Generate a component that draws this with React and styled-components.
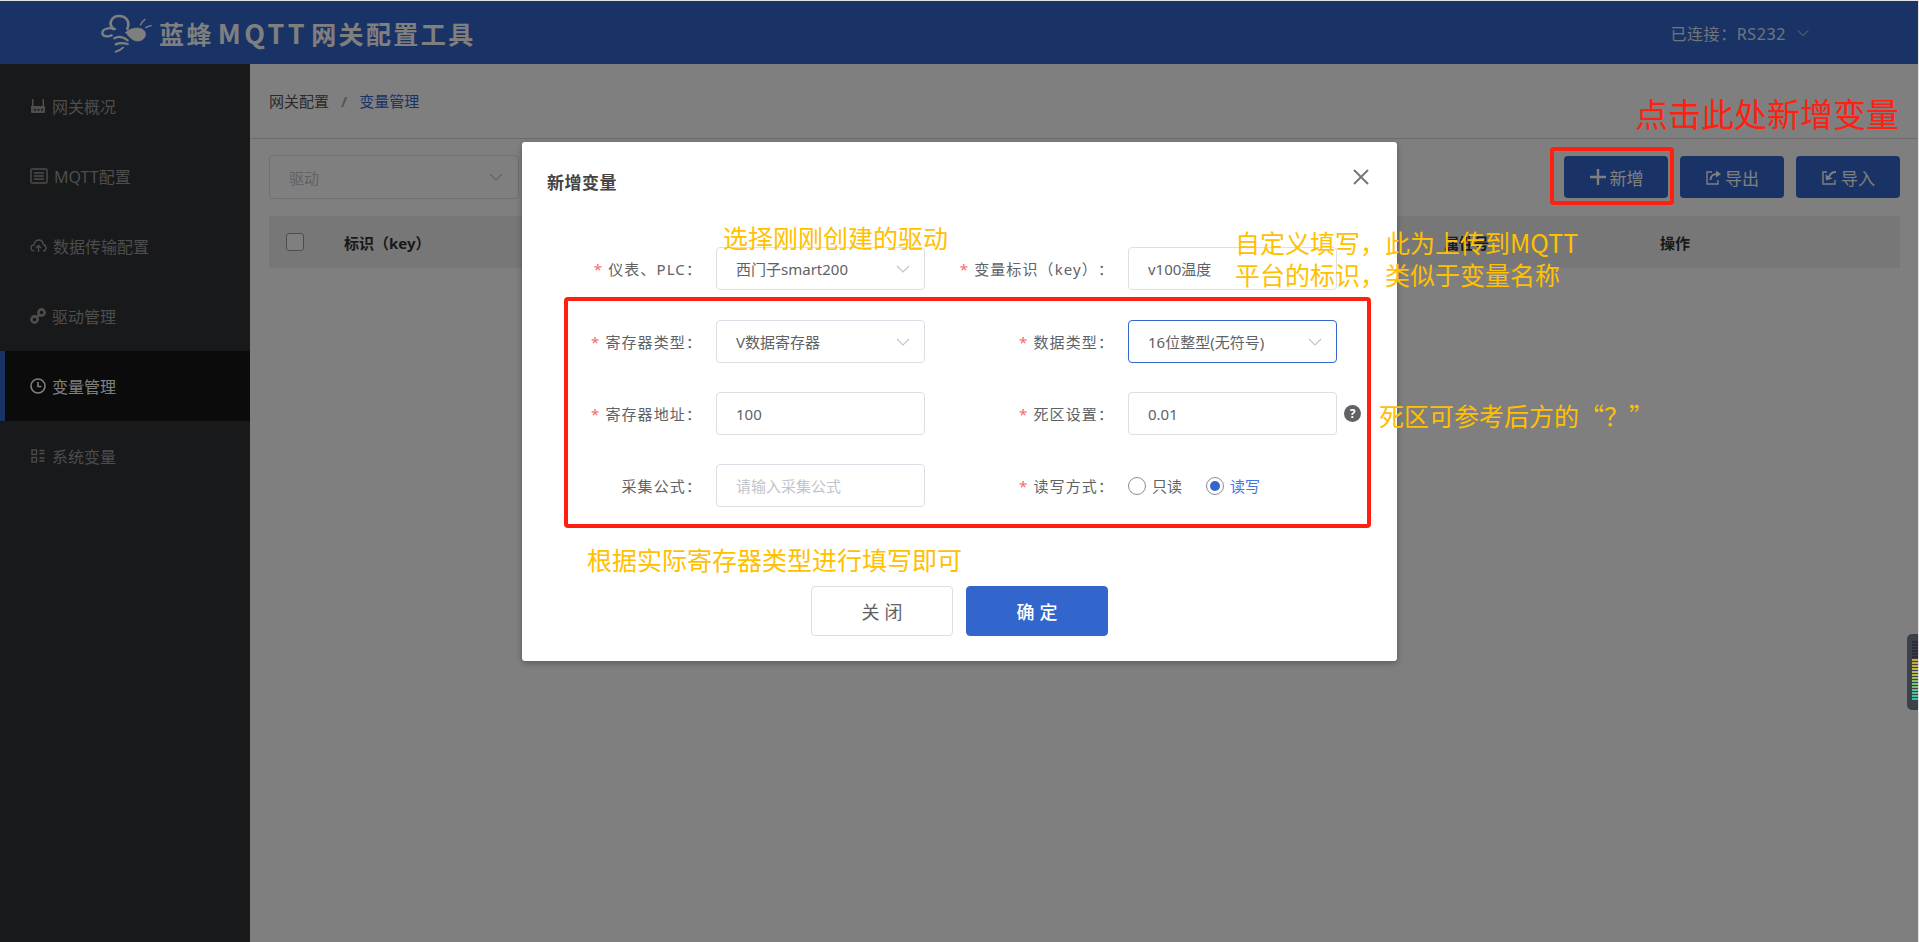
import React from 'react';
import styled, { createGlobalStyle } from 'styled-components';

const GlobalStyle = createGlobalStyle`
  html, body {
    margin: 0;
    padding: 0;
    background: #fff;
    font-family: "Noto Sans", "Noto Sans CJK SC", "Liberation Sans", sans-serif;
  }
  * { box-sizing: border-box; }
`;

const Page = styled.div`
  position: relative;
  width: 1919px;
  height: 942px;
  overflow: hidden;
  border-top: 1px solid #e4e4e4;
  border-right: 1px solid #e4e4e4;
  display: flex;
  flex-direction: column;
`;

const Header = styled.header`
  height: 63px;
  flex: none;
  background: #3366cc;
  display: flex;
  align-items: center;
  justify-content: space-between;
  padding: 0 109px 0 100px;
  color: #fff;
`;

const Brand = styled.div`
  display: flex;
  align-items: center;
  gap: 4px;
`;

const BrandTitle = styled.span`
  font-family: "Noto Sans CJK SC", sans-serif;
  font-size: 25px;
  font-weight: 700;
  letter-spacing: 2.4px;
  white-space: nowrap;
`;

const BrandLatin = styled.span`
  margin: 0 3px 0 4px;
  font-size: 27px;
  letter-spacing: 3.4px;
`;

const Connection = styled.div`
  display: flex;
  align-items: center;
  gap: 11px;
  font-size: 16px;
  color: #fff;
  opacity: 0.85;
  letter-spacing: 0.6px;
`;

const Body = styled.div`
  flex: 1;
  display: flex;
  min-height: 0;
`;

const Sidebar = styled.nav`
  width: 250px;
  flex: none;
  background: #303236;
  padding-top: 7px;
`;

const NavItem = styled.div`
  height: 70px;
  display: flex;
  align-items: center;
  gap: 6px;
  font-size: 16px;
  color: ${p => (p.$active ? '#fff' : '#9a9a9a')};
  background: ${p => (p.$active ? '#161616' : 'transparent')};
  border-left: ${p => (p.$active ? '5px solid #3366cc' : 'none')};
  padding-left: ${p => (p.$active ? '25px' : '30px')};
  white-space: nowrap;
`;

const Main = styled.main`
  flex: 1;
  display: flex;
  flex-direction: column;
  min-width: 0;
  background: #fff;
`;

const Breadcrumb = styled.div`
  height: 75px;
  flex: none;
  display: flex;
  align-items: center;
  padding: 0 19px 1px;
  border-bottom: 1px solid #d8d8d8;
  font-size: 15px;
  color: #555;
`;

const CrumbSep = styled.span`
  margin: 0 12px;
  color: #aaa;
  font-weight: 700;
`;

const CrumbCurrent = styled.span`
  color: #3366cc;
`;

const Toolbar = styled.div`
  display: flex;
  align-items: center;
  justify-content: space-between;
  padding: 16px 18px 17px 19px;
`;

const FilterSelect = styled.div`
  width: 250px;
  height: 44px;
  border: 1px solid #dcdfe6;
  border-radius: 4px;
  display: flex;
  align-items: center;
  justify-content: space-between;
  padding: 0 15px 0 19px;
  color: #c0c4cc;
  font-size: 15px;
`;

const ToolbarActions = styled.div`
  display: flex;
  gap: 12px;
`;

const ActionButton = styled.button`
  width: 104px;
  height: 42px;
  border: none;
  border-radius: 4px;
  background: #3366cc;
  color: #fff;
  font-family: inherit;
  font-size: 17px;
  display: flex;
  align-items: center;
  justify-content: center;
  gap: 3px;
  padding: 0;
`;

const TableHead = styled.div`
  margin: 0 18px 0 19px;
  height: 52px;
  background: #eee;
  display: grid;
  grid-template-columns: 75px 1100px 216px 1fr;
  align-items: center;
  font-size: 15px;
  font-weight: 700;
  color: #333;
`;

const CheckBox = styled.span`
  width: 18px;
  height: 18px;
  margin-left: 17px;
  background: #fff;
  border: 1px solid #9a9ba0;
  border-radius: 3px;
`;

const Overlay = styled.div`
  position: absolute;
  inset: 0;
  background: rgba(0, 0, 0, 0.5);
  display: flex;
  justify-content: center;
  align-items: flex-start;
  padding: 141px 0 0 1px;
`;

const Modal = styled.section`
  width: 875px;
  height: 519px;
  background: #fff;
  border-radius: 3px;
  box-shadow: 0 2px 6px rgba(0, 0, 0, 0.3);
  display: flex;
  flex-direction: column;
`;

const ModalHead = styled.div`
  height: 105px;
  flex: none;
  display: flex;
  justify-content: space-between;
  align-items: flex-start;
  padding: 29px 28px 0 25px;
`;

const ModalTitle = styled.h3`
  margin: 0;
  font-size: 17px;
  letter-spacing: 0.5px;
  line-height: 24px;
  font-weight: 700;
  color: #444;
`;

const CloseIcon = styled.svg`
  margin-top: -2px;
  width: 16px;
  height: 16px;
`;

const FormRow = styled.div`
  display: grid;
  grid-template-columns: 194px 209px 203px 209px auto;
  align-items: center;
  height: 43px;
  margin-bottom: ${p => (p.$first ? '30px' : '29px')};
`;

const FieldLabel = styled.label`
  text-align: right;
  padding-right: 14px;
  font-size: 15px;
  letter-spacing: 1.1px;
  text-spacing-trim: space-all;
  color: #606266;
  white-space: nowrap;

  &::before {
    content: ${p => (p.$required ? "'*'" : "''")};
    color: #f56c6c;
    margin-right: 5px;
  }
`;

const TextField = styled.input`
  width: 209px;
  height: 43px;
  border: 1px solid #dcdfe6;
  border-radius: 4px;
  padding: 0 19px;
  font-family: inherit;
  font-size: 15px;
  color: #606266;
  outline: none;

  &::placeholder {
    color: #c0c4cc;
  }
`;

const SelectField = styled.div`
  width: 209px;
  height: 43px;
  border: 1px solid ${p => (p.$focused ? '#3366cc' : '#dcdfe6')};
  border-radius: 4px;
  display: flex;
  align-items: center;
  justify-content: space-between;
  padding: 0 14px 0 19px;
  font-size: 15px;
  color: #606266;
  white-space: nowrap;
`;

const HelpBadge = styled.span`
  width: 17px;
  height: 17px;
  margin-left: 7px;
  border-radius: 50%;
  background: #606266;
  color: #fff;
  font-size: 12px;
  font-weight: 700;
  line-height: 17px;
  text-align: center;
`;

const RadioGroup = styled.div`
  display: flex;
  align-items: center;
`;

const RadioDot = styled.span`
  width: 18px;
  height: 18px;
  border-radius: 50%;
  border: 1px solid #8a8d93;
  display: flex;
  align-items: center;
  justify-content: center;
  flex: none;

  &::after {
    content: '';
    width: 10px;
    height: 10px;
    border-radius: 50%;
    background: ${p => (p.$checked ? '#3366cc' : 'transparent')};
  }
`;

const RadioText = styled.span`
  margin: 0 24px 0 6px;
  font-size: 15px;
  white-space: nowrap;
  color: ${p => (p.$checked ? '#3f74e6' : '#606266')};
`;

const ModalFooter = styled.div`
  margin-top: 50px;
  display: flex;
  justify-content: center;
  gap: 13px;
`;

const FooterButton = styled.button`
  width: 142px;
  height: 50px;
  border-radius: 4px;
  border: 1px solid ${p => (p.$primary ? '#3366cc' : '#dcdfe6')};
  background: ${p => (p.$primary ? '#3366cc' : '#fff')};
  color: ${p => (p.$primary ? '#fff' : '#606266')};
  font-family: inherit;
  font-size: 18px;
  font-weight: ${p => (p.$primary ? 500 : 400)};
  letter-spacing: 5px;
  text-indent: 5px;
`;

const Annotation = styled.div`
  position: absolute;
  left: ${p => p.$x}px;
  top: ${p => p.$y}px;
  font-family: "Noto Sans CJK SC", sans-serif;
  font-size: ${p => p.$size || 25}px;
  line-height: ${p => p.$line || 32}px;
  color: ${p => p.$color || '#ffc000'};
  white-space: nowrap;
`;

const RedFrame = styled.div`
  position: absolute;
  left: ${p => p.$x}px;
  top: ${p => p.$y}px;
  width: ${p => p.$w}px;
  height: ${p => p.$h}px;
  border: 4px solid #ff2012;
  border-radius: 4px;
`;

const FloatWidget = styled.svg`
  position: absolute;
  right: 0;
  top: 633px;
`;

const Chevron = ({ size = 14, color = '#c0c4cc' }) => (
  <svg width={size} height={size} viewBox="0 0 14 14" fill="none" stroke={color} strokeWidth="1.1">
    <path d="M1 4l6 6 6-6" />
  </svg>
);

const Logo = () => (
  <svg width="55" height="40" viewBox="15 18 165 120" fill="none" stroke="#fff" strokeLinecap="round">
    <path d="M55 66C38 50 50 27 72 27c22 0 34 18 25 38" strokeWidth="8" />
    <path d="M60 66C42 60 22 66 22 78c0 10 14 13 28 7" strokeWidth="7" />
    <path d="M92 76c14-14 46-20 58-2 6 14-6 28-22 28-16 0-28-14-36-26z" fill="#fff" strokeWidth="2" />
    <path d="M136 54c3-7 8-13 14-17M152 62c5-3 10-5 17-6" strokeWidth="4" />
    <path d="M58 94c12-7 26-5 40 6M62 112c10-5 22-5 36-1" strokeWidth="7" />
    <path d="M62 134c8-2 16-6 22-12" strokeWidth="6" />
  </svg>
);

const RouterIcon = () => (
  <svg width="16" height="16" viewBox="0 0 16 16" fill="#9a9a9a">
    <path d="M2 1h1.5v7H2zM12.5 1H14v7h-1.5z" />
    <path d="M1 8h14v6a1 1 0 0 1-1 1H2a1 1 0 0 1-1-1z" />
    <path d="M4 11h2v1.5H4zM7.5 11h2v1.5h-2zM11 11h2v1.5h-2z" fill="#303236" />
  </svg>
);

const PanelIcon = () => (
  <svg width="18" height="16" viewBox="0 0 18 16" fill="none" stroke="#9a9a9a" strokeWidth="1.4">
    <rect x="1" y="1" width="16" height="14" rx="1" />
    <path d="M4 5h10M4 8h10M4 11h10" />
  </svg>
);

const CloudIcon = () => (
  <svg width="17" height="14" viewBox="0 0 17 14" fill="none" stroke="#9a9a9a" strokeWidth="1.3">
    <path d="M4.5 12C2 12 1 10.500 1 9c0-2 1.500-3 3-3 .5-3 2.500-5 5-5 2.500 0 4 2 4.300 4.500C15 5.800 16 7.300 16 9c0 1.500-1 3-3 3" />
    <path d="M8.500 13V7M6 9l2.500-2.500L11 9" />
  </svg>
);

const LinkIcon = () => (
  <svg width="16" height="16" viewBox="0 0 16 16" fill="none" stroke="#9a9a9a" strokeWidth="2.600">
    <circle cx="4.500" cy="11.500" r="3.100" />
    <circle cx="11.500" cy="4.500" r="3.100" />
    <path d="M6 10l4-4" />
  </svg>
);

const ClockIcon = () => (
  <svg width="16" height="16" viewBox="0 0 16 16" fill="none" stroke="#fff" strokeWidth="1.600">
    <circle cx="8" cy="8" r="7" />
    <path d="M8 4v4.500h3.500" />
  </svg>
);

const ListIcon = () => (
  <svg width="16" height="16" viewBox="0 0 16 16" fill="none" stroke="#9a9a9a" strokeWidth="1.300">
    <rect x="2" y="2" width="4.500" height="4.500" />
    <rect x="2" y="9.500" width="4.500" height="4.500" />
    <path d="M9.500 2.500h5M9.500 5.500h5M9.500 10h5M9.500 13h5" />
  </svg>
);

const PlusIcon = () => (
  <svg width="18" height="18" viewBox="0 0 18 18" stroke="#fff" strokeWidth="2.400">
    <path d="M9 1v16M1 9h16" />
  </svg>
);

const ExportIcon = () => (
  <svg width="17" height="17" viewBox="0 0 17 17" fill="none" stroke="#fff" strokeWidth="1.400">
    <path d="M7 3H2v12h11v-4" />
    <path d="M5.500 11c0-4 3-6 6.500-6" strokeWidth="2" />
    <path d="M11 1.500L16 5l-5 3.500z" fill="#fff" stroke="none" />
  </svg>
);

const ImportIcon = () => (
  <svg width="17" height="17" viewBox="0 0 17 17" fill="none" stroke="#fff" strokeWidth="1.400">
    <path d="M6 3H2v12h12v-4" />
    <path d="M15 3c-4 0-6 2-7 5" strokeWidth="2" />
    <path d="M4.500 5.500l7 4-6.500 2z" fill="#fff" stroke="none" />
  </svg>
);

const navItems = [
  { label: '网关概况', icon: <RouterIcon /> },
  { label: 'MQTT配置', icon: <PanelIcon /> },
  { label: '数据传输配置', icon: <CloudIcon /> },
  { label: '驱动管理', icon: <LinkIcon /> },
  { label: '变量管理', icon: <ClockIcon />, active: true },
  { label: '系统变量', icon: <ListIcon /> },
];

const meterColors = [
  '#2a2d35', '#2a2d35', '#2a2d35', '#2a2d35', '#2a2d35', '#2a2d35',
  '#c9a83a', '#c9a83a', '#c4b040', '#bdb848', '#b0bc50', '#a4c058',
  '#98c060', '#8cc068', '#80c070', '#70c080', '#60c08c', '#50c098', '#40c0a4', '#30c0b0',
];

const LevelMeter = () => (
  <FloatWidget width="11" height="76" viewBox="0 0 11 76">
    <path d="M11 0H5a5 5 0 0 0-5 5v66a5 5 0 0 0 5 5h6z" fill="#3b404b" />
    {meterColors.map((color, i) => (
      <rect key={i} x="5" y={7 + i * 3} width="6" height="2" fill={color} />
    ))}
  </FloatWidget>
);

const App = () => (
  <Page>
    <GlobalStyle />
    <Header>
      <Brand>
        <Logo />
        <BrandTitle>蓝蜂<BrandLatin>MQTT</BrandLatin>网关配置工具</BrandTitle>
      </Brand>
      <Connection>
        已连接：RS232
        <Chevron size={12} color="#fff" />
      </Connection>
    </Header>
    <Body>
      <Sidebar>
        {navItems.map(item => (
          <NavItem key={item.label} $active={item.active}>
            {item.icon}
            {item.label}
          </NavItem>
        ))}
      </Sidebar>
      <Main>
        <Breadcrumb>
          网关配置
          <CrumbSep>/</CrumbSep>
          <CrumbCurrent>变量管理</CrumbCurrent>
        </Breadcrumb>
        <Toolbar>
          <FilterSelect>
            驱动
            <Chevron />
          </FilterSelect>
          <ToolbarActions>
            <ActionButton><PlusIcon />新增</ActionButton>
            <ActionButton><ExportIcon />导出</ActionButton>
            <ActionButton><ImportIcon />导入</ActionButton>
          </ToolbarActions>
        </Toolbar>
        <TableHead>
          <CheckBox />
          <span>标识（key）</span>
          <span>属性号</span>
          <span>操作</span>
        </TableHead>
      </Main>
    </Body>
    <Overlay>
      <Modal>
        <ModalHead>
          <ModalTitle>新增变量</ModalTitle>
          <CloseIcon viewBox="0 0 16 16" stroke="#777" strokeWidth="2">
            <path d="M1 1l14 14M15 1L1 15" />
          </CloseIcon>
        </ModalHead>
        <FormRow $first>
          <FieldLabel $required>仪表、PLC：</FieldLabel>
          <SelectField>西门子smart200<Chevron /></SelectField>
          <FieldLabel $required>变量标识（key）：</FieldLabel>
          <TextField readOnly value="v100温度" />
        </FormRow>
        <FormRow>
          <FieldLabel $required>寄存器类型：</FieldLabel>
          <SelectField>V数据寄存器<Chevron /></SelectField>
          <FieldLabel $required>数据类型：</FieldLabel>
          <SelectField $focused>16位整型(无符号)<Chevron /></SelectField>
        </FormRow>
        <FormRow>
          <FieldLabel $required>寄存器地址：</FieldLabel>
          <TextField readOnly value="100" />
          <FieldLabel $required>死区设置：</FieldLabel>
          <TextField readOnly value="0.01" />
          <HelpBadge>?</HelpBadge>
        </FormRow>
        <FormRow>
          <FieldLabel>采集公式：</FieldLabel>
          <TextField readOnly placeholder="请输入采集公式" />
          <FieldLabel $required>读写方式：</FieldLabel>
          <RadioGroup>
            <RadioDot />
            <RadioText>只读</RadioText>
            <RadioDot $checked />
            <RadioText $checked>读写</RadioText>
          </RadioGroup>
        </FormRow>
        <ModalFooter>
          <FooterButton>关闭</FooterButton>
          <FooterButton $primary>确定</FooterButton>
        </ModalFooter>
      </Modal>

      <RedFrame $x={1550} $y={146} $w={124} $h={58} />
      <RedFrame $x={564} $y={296} $w={807} $h={231} />
      <Annotation $x={1635} $y={92} $size={33} $line={40} $color="#ff2012">点击此处新增变量</Annotation>
      <Annotation $x={723} $y={220}>选择刚刚创建的驱动</Annotation>
      <Annotation $x={1235} $y={225}>
        自定义填写，此为上传到MQTT
        <br />
        平台的标识，类似于变量名称
      </Annotation>
      <Annotation $x={1379} $y={398}>死区可参考后方的“？”</Annotation>
      <Annotation $x={587} $y={542}>根据实际寄存器类型进行填写即可</Annotation>
      <LevelMeter />
    </Overlay>
  </Page>
);

export default App;
